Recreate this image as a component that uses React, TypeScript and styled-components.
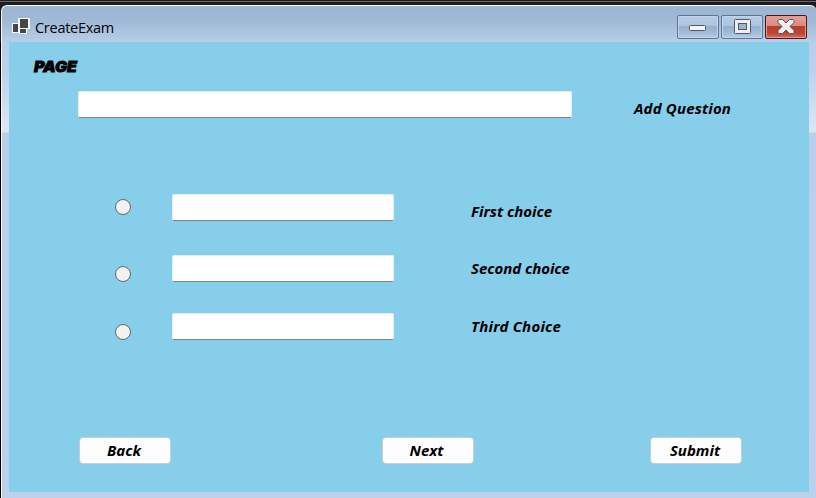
import React from "react";
import styled, { createGlobalStyle } from "styled-components";

const GlobalStyle = createGlobalStyle`
  * { box-sizing: border-box; }
  body { margin: 0; background: #000; overflow: hidden; }
`;

const Desktop = styled.div`
  width: 816px;
  height: 498px;
  padding: 5px 0 0 1px;
  overflow: hidden;
  background: linear-gradient(#1b1a1d 0 1px, #69686b 1px 2px, #1c1b1e 2px 5px, #1c1b1e 42px, #000 42px);
  font-family: "Noto Sans", "Open Sans", sans-serif;
  color: #000;
`;

const Window = styled.main`
  width: 816px;
  height: 493px;
  border-top: 1px solid #f5f9fd;
  border-left: 1px solid #f5f9fd;
  border-radius: 6px 7px 0 0;
  padding: 0 7px;
  background: linear-gradient(#9bb5d2 0, #9fb9d6 15px, #b8cee9 36px, #bcd2ec 65px, #dce7f4 125px, #dce7f4 126px, #b9cfea 127px, #bbd1ec 100%);
`;

const TitleBar = styled.header`
  width: 800px;
  height: 36px;
  display: flex;
  align-items: flex-start;
  padding: 9px 2px 0 3px;
`;

const AppIcon = styled.svg`
  width: 18px;
  height: 17px;
  margin-top: 3px;
  flex: none;
`;

const Title = styled.h1`
  margin: 4px auto 0 5px;
  font: 400 14.5px/18px "Open Sans", "Noto Sans", sans-serif;
  letter-spacing: -0.27px;
`;

const Controls = styled.div`
  display: flex;
  gap: 2px;
`;

const Control = styled.button<{ $close?: boolean }>`
  width: 42px;
  height: 24px;
  padding: 0;
  display: grid;
  place-items: center;
  border: 1px solid ${(p) => (p.$close ? "#4b1420" : "#60758f")};
  border-radius: 2px;
  box-shadow: inset 0 0 0 1px ${(p) => (p.$close ? "#e59a8f" : "#c0d5ec")};
  background: ${(p) =>
    p.$close
      ? "linear-gradient(#e4a196 0, #d9897c 10px, #b53e2a 10px, #bd4430 17px, #d5705b 100%)"
      : "linear-gradient(#b6cce4 0, #adc4de 10px, #94afcc 10px, #a1bbd8 17px, #b4cde9 100%)"};
  svg { display: block; }
`;

const Client = styled.section`
  width: 800px;
  height: 450px;
  background: #87ceeb;
  overflow: hidden;
`;

const PageHeading = styled.h2`
  height: 49px;
  margin: 0;
  padding: 16px 0 0 25px;
  font: italic 900 14px/18px Inter, sans-serif;
  letter-spacing: 0;
  transform: scaleX(1.14);
  transform-origin: 25px 0;
  -webkit-text-stroke: 0.8px #000;
`;

const Field = styled.input<{ $width: number }>`
  width: ${(p) => p.$width}px;
  height: 27px;
  flex: none;
  padding: 3px 6px;
  border: 1px solid #e5eef2;
  border-bottom-color: #808386;
  border-radius: 2px;
  background: #fff;
  outline: none;
  font: 14px "Noto Sans", sans-serif;
`;

const Label = styled.label<{ $gap: number; $top: number; $spacing?: number }>`
  margin: ${(p) => p.$top}px 0 0 ${(p) => p.$gap}px;
  font: italic 700 15px/20px "Noto Sans", sans-serif;
  letter-spacing: ${(p) => p.$spacing ?? 0}px;
  white-space: nowrap;
`;

const QuestionRow = styled.div`
  display: flex;
  align-items: flex-start;
  height: 103px;
  padding-left: 69px;
`;

const ChoiceRow = styled.div<{ $height: number }>`
  display: flex;
  align-items: flex-start;
  height: ${(p) => p.$height}px;
  padding-left: 106px;
`;

const Radio = styled.input<{ $top: number }>`
  appearance: none;
  width: 16px;
  height: 16px;
  flex: none;
  margin: ${(p) => p.$top}px 41px 0 0;
  border: 1px solid #62676a;
  border-radius: 50%;
  background: #f2f2f2;
  &:checked { box-shadow: inset 0 0 0 4px #0067c0; }
`;

const Actions = styled.footer`
  display: grid;
  grid-template-columns: 92px 92px 92px;
  column-gap: 0;
  justify-content: space-between;
  padding: 0 67px 0 70px;
`;

const ActionButton = styled.button<{ $shift?: number }>`
  width: 92px;
  height: 27px;
  margin-left: ${(p) => p.$shift ?? 0}px;
  padding: 0 2px 1px 0;
  border: 1px solid #c9ced1;
  border-radius: 4px;
  background: #fdfdfd;
  color: #000;
  font: italic 700 15px/20px "Noto Sans", sans-serif;
`;

const choices = [
  { label: "First choice", height: 61, radio: 5, text: 7, spacing: 0 },
  { label: "Second choice", height: 58, radio: 11, text: 3, spacing: -0.04 },
  { label: "Third Choice", height: 124, radio: 11, text: 3, spacing: 0.22 },
];

export default function App() {
  return (
    <>
      <GlobalStyle />
      <Desktop>
        <Window>
          <TitleBar>
            <AppIcon viewBox="0 0 18 17" shapeRendering="crispEdges">
              <path d="M6 0h12v11h-3v5H7v-1H0V5h6z" fill="#f5f8fa" />
              <path d="M8 1h8v9H8zM1 6h5v8H1zM8 11h6v4H8z" fill="#444746" />
            </AppIcon>
            <Title>CreateExam</Title>
            <Controls>
              <Control aria-label="Minimize">
                <svg width="18" height="8" viewBox="0 0 18 8">
                  <rect x=".5" y="2.5" width="16" height="5" rx="1" fill="#f5f5f5" stroke="#525866" />
                </svg>
              </Control>
              <Control aria-label="Maximize">
                <svg width="17" height="16" viewBox="0 0 17 16">
                  <rect x=".5" y=".5" width="16" height="14" rx="1" fill="#eeeeef" stroke="#525866" />
                  <rect x="4.5" y="4.5" width="8" height="6" fill="#9ab5d2" stroke="#525866" />
                </svg>
              </Control>
              <Control $close aria-label="Close">
                <svg width="18" height="16" viewBox="0 0 18 16">
                  <path d="M2 .5h3.5L9 4 12.5.5H16l1 1v2L13 7.5l4 4v2l-1 1h-3.5L9 11l-3.5 3.5H2l-1-1v-2l4-4-4-4v-2z" fill="#f0f0f1" stroke="#56515b" strokeLinejoin="round" />
                </svg>
              </Control>
            </Controls>
          </TitleBar>
          <Client>
            <PageHeading>PAGE</PageHeading>
            <QuestionRow>
              <Field $width={494} id="question" />
              <Label htmlFor="question" $gap={62} $top={7} $spacing={0.16}>Add Question</Label>
            </QuestionRow>
            {choices.map((c, i) => (
              <ChoiceRow key={c.label} $height={c.height}>
                <Radio type="radio" name="answer" aria-label={c.label} $top={c.radio} />
                <Field $width={222} id={`choice-${i}`} />
                <Label htmlFor={`choice-${i}`} $gap={77} $top={c.text} $spacing={c.spacing}>{c.label}</Label>
              </ChoiceRow>
            ))}
            <Actions>
              <ActionButton>Back</ActionButton>
              <ActionButton $shift={17}>Next</ActionButton>
              <ActionButton>Submit</ActionButton>
            </Actions>
          </Client>
        </Window>
      </Desktop>
    </>
  );
}
